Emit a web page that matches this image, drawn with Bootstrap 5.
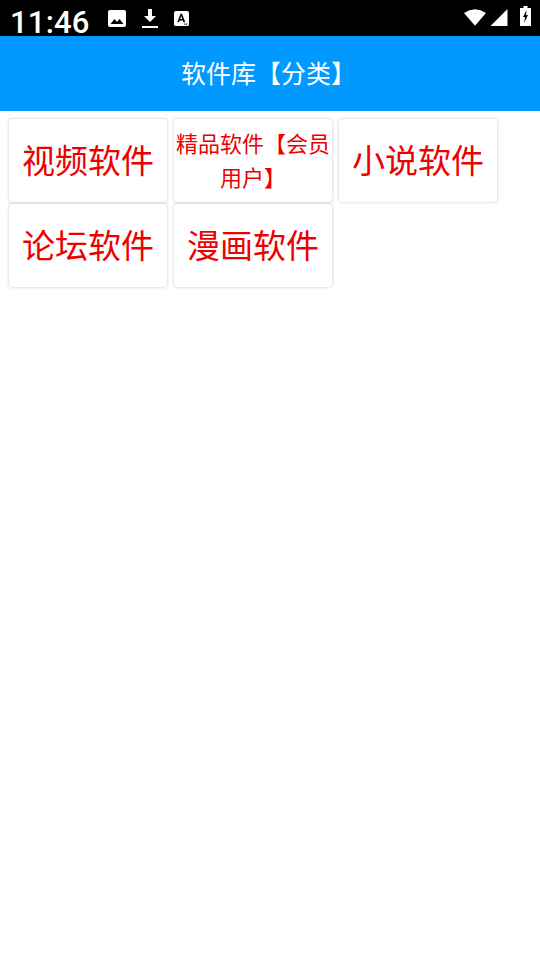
<!DOCTYPE html>
<html lang="zh">
<head>
<meta charset="utf-8">
<title>软件库【分类】</title>
<link href="https://cdn.jsdelivr.net/npm/bootstrap@5.3.0/dist/css/bootstrap.min.css" rel="stylesheet">
<style>
html, body { height: 100%; }
body { width: 540px; height: 960px; overflow: hidden; background: #fff; font-family: "Noto Sans CJK SC", "Liberation Sans", sans-serif; }
.status-strip { height: 36px; background: #000; color: #fff; padding: 0 9px 0 10px; }
.status-clock { font-family: Roboto, "Liberation Sans", sans-serif; font-size: 31px; font-weight: 500; line-height: 31px; margin-top: 8px; letter-spacing: .2px; width: 84px; }
.status-left { gap: 14px; }
.status-icons { gap: 16px; margin-top: 1px; }
.status-right { margin-top: -4px; }
.gap-wifi { margin-right: 4px; }
.gap-signal { margin-right: 12px; }
.app-bar { height: 75px; background: #0099ff; color: #fff; font-size: 25px; line-height: 1; padding: 0 3px 3px 0; }
.tile-grid { padding: 8px 0 0 9px; width: 504px; gap: 2px 7px; }
.tile { width: 158px; height: 83px; background: #fff; border: 0; border-radius: 3px; box-shadow: 0 0 3px rgba(0,0,0,.25); color: #ee0000; font-size: 33px; line-height: 1.2; padding-bottom: 2px; text-align: center; text-decoration: none; }
.tile-small { font-size: 22px; line-height: 34px; padding: 0 2px 4px; }
</style>
</head>
<body>
<div class="status-strip d-flex align-items-center justify-content-between">
  <div class="d-flex align-items-center status-left">
    <div class="status-clock">11:46</div>
    <div class="d-flex align-items-center status-icons">
      <svg width="18" height="18" viewBox="0 0 18 18"><rect x="0" y="0" width="18" height="17" rx="2" fill="#fff"/><path d="M2.5 14 L6.5 9 L9 12 L11.5 9 L15.5 14 Z" fill="#000"/></svg>
      <svg width="16" height="20" viewBox="0 0 16 20"><path d="M6 0h4v7h4l-6 6-6-6h4z" fill="#fff"/><rect x="0" y="17" width="16" height="2" fill="#fff"/></svg>
      <svg width="15" height="15" viewBox="0 0 16 16"><rect width="16" height="16" rx="2" fill="#fff"/><path d="M3.5 12 L7 3 H8.6 L12 12 H10.1 L9.4 10 H6.1 L5.4 12 Z M6.7 8.5 H8.9 L7.8 5.4 Z" fill="#000"/><path d="M11 13.4h1.2v1.2H11zM13 13.4h1.2v1.2H13z" fill="#000"/></svg>
    </div>
  </div>
  <div class="d-flex align-items-end status-right">
    <svg class="gap-wifi" width="22" height="17" viewBox="0 0 24 18"><path d="M0 4 Q12 -4 24 4 L12 18 Z" fill="#fff"/></svg>
    <svg class="gap-signal" width="18" height="17" viewBox="0 0 18 18"><path d="M0 18 L18 0 V18 Z" fill="#fff"/></svg>
    <svg width="11" height="20" viewBox="0 0 11 20"><path d="M3.5 0h4v2H11v18H0V2h3.5z" fill="#fff"/><path d="M6.5 4 L3 11 H5 L4.2 17 L8 9 H6 Z" fill="#000"/></svg>
  </div>
</div>
<div class="app-bar d-flex align-items-center justify-content-center">软件库【分类】</div>
<div class="tile-grid d-flex flex-wrap">
  <a class="tile d-flex align-items-center justify-content-center" href="#">视频软件</a>
  <a class="tile tile-small d-flex align-items-center justify-content-center" href="#">精品软件【会员用户】</a>
  <a class="tile d-flex align-items-center justify-content-center" href="#">小说软件</a>
  <a class="tile d-flex align-items-center justify-content-center" href="#">论坛软件</a>
  <a class="tile d-flex align-items-center justify-content-center" href="#">漫画软件</a>
</div>
<script src="https://cdn.jsdelivr.net/npm/bootstrap@5.3.0/dist/js/bootstrap.bundle.min.js"></script>
</body>
</html>
